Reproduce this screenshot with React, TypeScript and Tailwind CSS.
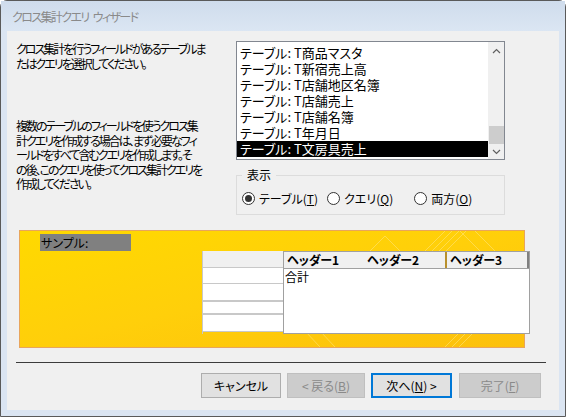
const jp = "font-['Noto_Sans_CJK_JP',sans-serif] [font-feature-settings:'palt']"

const tables = [
  'T商品マスタ',
  'T新宿売上高',
  'T店舗地区名簿',
  'T店舗売上',
  'T店舗名簿',
  'T年月日',
  'T文房具売上',
]

function Radio({ checked, children }: { checked?: boolean; children: React.ReactNode }) {
  return (
    <label className="flex items-center gap-[4px]">
      <span className="flex h-[13px] w-[13px] items-center justify-center rounded-full border border-[#333] bg-white">
        {checked && <span className="h-[7px] w-[7px] rounded-full bg-[#333]" />}
      </span>
      <span>{children}</span>
    </label>
  )
}

function Button({
  children,
  disabled,
  focused,
}: {
  children: React.ReactNode
  disabled?: boolean
  focused?: boolean
}) {
  const tone = disabled
    ? 'border-[#bfbfbf] bg-[#cccccc] text-[#8a8a8a]'
    : focused
      ? 'border-[#0078d7] bg-[#e1e1e1] text-black'
      : 'border-[#adadad] bg-[#e1e1e1] text-black'
  return (
    <div
      className={`flex h-[25px] items-center justify-center border ${focused ? 'border-2' : ''} ${tone}`}
    >
      {children}
    </div>
  )
}

function Chevron({ up }: { up?: boolean }) {
  return (
    <svg width="9" height="6" viewBox="0 0 9 6" className="text-[#606060]">
      <path
        d={up ? 'M1 5 L4.5 1.5 L8 5' : 'M1 1 L4.5 4.5 L8 1'}
        fill="none"
        stroke="currentColor"
        strokeWidth="1.2"
      />
    </svg>
  )
}

export default function App() {
  return (
    <div className={`h-[417px] w-[566px] bg-white text-[12px] leading-[15px] text-black ${jp}`}>
      {/* window frame */}
      <div className="flex h-full flex-col rounded-t-[7px] border border-[#5a5a5a] bg-[#dbe5f2]">
        <div className="flex h-[30px] items-center bg-gradient-to-b from-[#cfdcec] to-[#dbe6f3] pl-[11px] text-[12px] tracking-[-1.6px] text-[#8a8a8a]">
          クロス集計クエリ<span className="w-[4px]" />ウィザード
        </div>

        <div className="mx-[6px] mb-[6px] flex-1 bg-[#f0f0f0] pt-[10px]">
          {/* top section */}
          <div className="flex">
            <div className="w-[229px] pl-[9px] tracking-[-2px]">
              <p className="whitespace-nowrap">
                クロス集計を行うフィールドがあるテーブルま
                <br />
                たはクエリを選択してください。
              </p>
              <p className="mt-[48px] whitespace-nowrap leading-[14.5px]">
                複数のテーブルのフィールドを使うクロス集
                <br />
                計クエリを作成する場合は、まず必要なフィ
                <br />
                ールドをすべて含むクエリを作成します。そ
                <br />
                の後、このクエリを使ってクロス集計クエリを
                <br />
                作成してください。
              </p>
            </div>

            <div className="w-[269px]">
              <div className="flex h-[119px] border border-[#828790] bg-white">
                <ul className="flex-1 pt-[3px] text-[13px] leading-[16px]">
                  {tables.map((t, i) => (
                    <li
                      key={t}
                      className={`h-[16px] whitespace-nowrap pl-[3px] ${i === tables.length - 1 ? 'bg-black text-white' : ''}`}
                    >
                      テーブル: {t}
                    </li>
                  ))}
                </ul>
                <div className="flex w-[16px] flex-col items-center bg-[#f0f0f0]">
                  <div className="flex h-[17px] items-center">
                    <Chevron up />
                  </div>
                  <div className="mt-[67px] h-[18px] w-[15px] bg-[#cdcdcd]" />
                  <div className="flex h-[15px] items-center">
                    <Chevron />
                  </div>
                </div>
              </div>

              <fieldset className="mt-[8px] h-[47px] border border-[#dcdcdc] pl-[5px]">
                <legend className="px-[5px] leading-[14px]">表示</legend>
                <div className="mt-[9px] flex items-center">
                  <Radio checked>
                    テーブル(<u>T</u>)
                  </Radio>
                  <div className="ml-[9px]">
                    <Radio>
                      クエリ(<u>Q</u>)
                    </Radio>
                  </div>
                  <div className="ml-[21px]">
                    <Radio>
                      両方(<u>O</u>)
                    </Radio>
                  </div>
                </div>
              </fieldset>
            </div>
          </div>

          {/* sample panel */}
          <div className="relative ml-[12px] mt-[15px] h-[118px] w-[506px] border border-[#e8a55c] bg-gradient-to-br from-[#ffd900] via-[#ffcf0a] to-[#fcc00c] pl-[20px] pt-[3px]">
            <svg className="absolute inset-0 h-full w-full" viewBox="0 0 504 116" preserveAspectRatio="none">
              <g stroke="#ffe680" strokeWidth="1" opacity="0.55">
                <path d="M340 30 L365 5 L390 30" fill="none" />
                <path d="M395 30 L425 0 M402 30 L432 0 M409 30 L439 0 M416 30 L446 0" />
                <path d="M425 116 L445 96 M432 116 L452 96 M439 116 L459 96" />
                <path d="M440 0 L470 30 M455 0 L485 30" />
                <path d="M300 116 L285 100 M315 116 L300 100" />
              </g>
            </svg>
            <div className="relative h-[17px] w-[91px] bg-[#808080] pl-[1px] leading-[17px]">サンプル:</div>

            <div className="relative ml-[162px] flex w-[328px]">
              <div className="w-[81px] shrink-0 border-l border-[#c8c8c8]">
                <div className="h-[16px] bg-[#f0f0f0]" />
                <div className="h-[17px] border-y border-[#c8c8c8] bg-white" />
                <div className="h-[18px] border-b-2 border-[#c8c8c8] bg-white" />
                <div className="h-[13px] border-b-2 border-[#c8c8c8] bg-white" />
                <div className="h-[17px] border-b border-[#c8c8c8] bg-white" />
              </div>
              <div className="h-[83px] w-[247px] shrink-0 border border-[#a0a0a0] bg-white">
                <div className="flex h-[16px] bg-[#f0f0f0] font-semibold leading-[16px]">
                  <div className="w-[82px] pl-[3px]">ヘッダー1</div>
                  <div className="w-[79px] pl-[1px]">ヘッダー2</div>
                  <div className="flex-1 border-l-2 border-r-2 border-l-[#b8902c] border-r-[#808080] pl-[3px]">
                    ヘッダー3
                  </div>
                </div>
                <div className="border-t border-[#a0a0a0] pl-[1px] leading-[16px]">合計</div>
              </div>
            </div>
          </div>

          {/* separator */}
          <div className="mx-[9px] mt-[14px] h-[2px] w-[530px] border-t border-[#3c3c3c] border-b-white" />

          {/* buttons */}
          <div className="mt-[9px] flex pl-[194px]">
            <div className="w-[80px]">
              <Button>キャンセル</Button>
            </div>
            <div className="ml-[6px] w-[78px]">
              <Button disabled>
                &lt; 戻る(<u>B</u>)
              </Button>
            </div>
            <div className="ml-[6px] w-[81px]">
              <Button focused>
                次へ(<u>N</u>) &gt;
              </Button>
            </div>
            <div className="ml-[7px] w-[82px]">
              <Button disabled>
                完了(<u>F</u>)
              </Button>
            </div>
          </div>
        </div>
      </div>
    </div>
  )
}
